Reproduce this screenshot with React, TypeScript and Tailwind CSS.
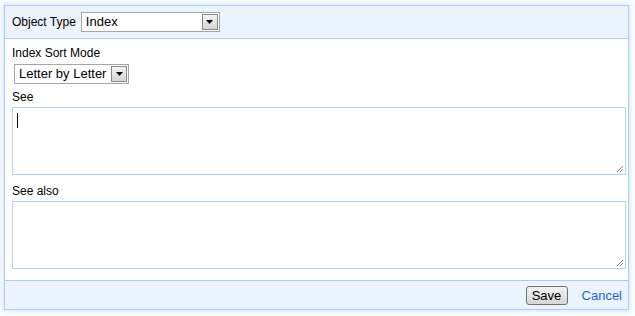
import React from 'react';

const font = { fontFamily: '"Liberation Sans", Arial, sans-serif' };

const DropArrow: React.FC = () => (
  <div className="h-full w-[16px] border border-[#8a8a8a] bg-gradient-to-b from-[#f4f4f4] to-[#d4d4d4] flex items-center justify-center">
    <svg width="7" height="4" viewBox="0 0 7 4">
      <path d="M0 0h7L3.5 4z" fill="#000" />
    </svg>
  </div>
);

const FakeSelect: React.FC<{ value: string; className: string }> = ({ value, className }) => (
  <div className={`h-[20px] flex items-stretch border border-[#a5a5a5] bg-white p-[1px] ${className}`}>
    <span className="flex-1 pl-[3px] text-[13px] leading-[16px] text-black whitespace-nowrap overflow-hidden">{value}</span>
    <DropArrow />
  </div>
);

const Grip: React.FC = () => (
  <svg className="absolute right-[1px] bottom-[1px]" width="8" height="8" viewBox="0 0 8 8">
    <path d="M7 1L1 7M7 4L4 7" stroke="#8a8a8a" strokeWidth="1" />
  </svg>
);

const TextBox: React.FC<{ caret?: boolean }> = ({ caret }) => (
  <div className="relative w-[614px] h-[68px] border border-[#b3d3f7] bg-white">
    {caret && <div className="absolute left-[4px] top-[5px] w-[1px] h-[15px] bg-black" />}
    <Grip />
  </div>
);

const App: React.FC = () => {
  return (
    <div className="w-[635px] h-[316px] bg-white pl-[4px] pt-[5px]" style={font}>
      <div className="w-[625px] h-[305px] border border-[#aacdf7] shadow-[0_0_5px_2px_#dbe9fb] flex flex-col text-[12px] text-black">
        <header className="h-[33px] shrink-0 bg-[#ebf3fe] border-b border-[#aacdf7] flex items-center pl-[7px]">
          <span className="leading-[14px]">Object Type</span>
          <FakeSelect value="Index" className="ml-[5px] w-[139px]" />
        </header>
        <div className="h-[241px] shrink-0 bg-white pl-[7px] flex flex-col">
          <span className="mt-[7px] leading-[14px]">Index Sort Mode</span>
          <FakeSelect value="Letter by Letter" className="mt-[4px] ml-[2px] w-[115px]" />
          <span className="mt-[6px] leading-[14px]">See</span>
          <div className="mt-[3px]">
            <TextBox caret />
          </div>
          <span className="mt-[9px] leading-[14px]">See also</span>
          <div className="mt-[3px]">
            <TextBox />
          </div>
        </div>
        <footer className="flex-1 bg-[#ebf3fe] border-t border-[#aacdf7] flex items-center justify-end pr-[6px]">
          <button className="w-[42px] h-[19px] border border-[#707070] rounded-[3px] bg-gradient-to-b from-[#f2f2f2] to-[#d6d6d6] text-[13px] leading-[15px] text-black">
            Save
          </button>
          <span className="ml-[14px] text-[13px] leading-[15px] text-[#1a66d6]">Cancel</span>
        </footer>
      </div>
    </div>
  );
};

export default App;
